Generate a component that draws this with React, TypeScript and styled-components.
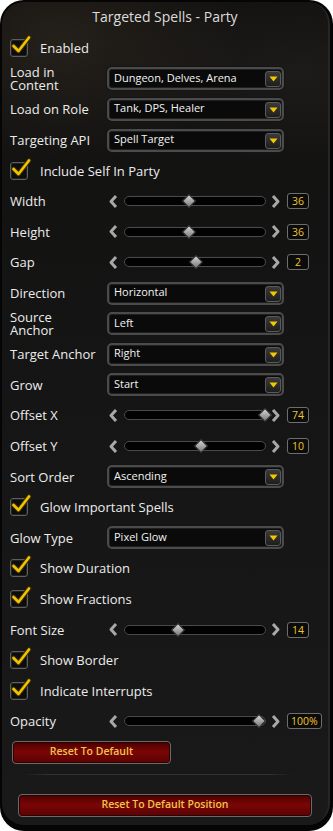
import React from 'react'
import styled, { createGlobalStyle } from 'styled-components'

const Global = createGlobalStyle`
  html, body { margin: 0; padding: 0; background: #fff; }
  * { box-sizing: border-box; }
`

type Row =
  | { kind: 'check'; label: string }
  | { kind: 'drop'; label: string; value: string; two?: boolean }
  | { kind: 'slider'; label: string; value: string; pos: number }

const rows: Row[] = [
  { kind: 'check', label: 'Enabled' },
  { kind: 'drop', label: 'Load in\nContent', value: 'Dungeon, Delves, Arena', two: true },
  { kind: 'drop', label: 'Load on Role', value: 'Tank, DPS, Healer' },
  { kind: 'drop', label: 'Targeting API', value: 'Spell Target' },
  { kind: 'check', label: 'Include Self In Party' },
  { kind: 'slider', label: 'Width', value: '36', pos: 46 },
  { kind: 'slider', label: 'Height', value: '36', pos: 46 },
  { kind: 'slider', label: 'Gap', value: '2', pos: 51 },
  { kind: 'drop', label: 'Direction', value: 'Horizontal' },
  { kind: 'drop', label: 'Source\nAnchor', value: 'Left', two: true },
  { kind: 'drop', label: 'Target Anchor', value: 'Right' },
  { kind: 'drop', label: 'Grow', value: 'Start' },
  { kind: 'slider', label: 'Offset X', value: '74', pos: 100 },
  { kind: 'slider', label: 'Offset Y', value: '10', pos: 54 },
  { kind: 'drop', label: 'Sort Order', value: 'Ascending' },
  { kind: 'check', label: 'Glow Important Spells' },
  { kind: 'drop', label: 'Glow Type', value: 'Pixel Glow' },
  { kind: 'check', label: 'Show Duration' },
  { kind: 'check', label: 'Show Fractions' },
  { kind: 'slider', label: 'Font Size', value: '14', pos: 38 },
  { kind: 'check', label: 'Show Border' },
  { kind: 'check', label: 'Indicate Interrupts' },
  { kind: 'slider', label: 'Opacity', value: '100%', pos: 96 },
]

const Check = () => (
  <CheckBox>
    <CheckMark width="22" height="21" viewBox="0 0 22 21">
      <path d="M3.5 11 L8.5 16 L19 2.5" fill="none" stroke="#3a2c00" strokeWidth="4.6" strokeLinecap="round" strokeLinejoin="round" />
      <path d="M3.5 11 L8.5 16 L19 2.5" fill="none" stroke="#f0c400" strokeWidth="2.6" strokeLinecap="round" strokeLinejoin="round" />
    </CheckMark>
  </CheckBox>
)

const Chevron = ({ dir }: { dir: 'l' | 'r' }) => (
  <svg width="10" height="15" viewBox="0 0 10 15">
    <path d={dir === 'l' ? 'M8 2 L3 7.5 L8 13' : 'M2 2 L7 7.5 L2 13'} fill="none" stroke="#a8a8a8" strokeWidth="3" strokeLinejoin="round" />
  </svg>
)

const App = () => {
  return (
    <>
      <Global />
      <Frame>
        <Inner>
          <Title>Targeted Spells - Party</Title>
          <List>
            {rows.map((r) => (
              <Line key={r.label}>
                {r.kind === 'check' ? (
                  <>
                    <Check />
                    <CheckLabel>{r.label}</CheckLabel>
                  </>
                ) : (
                  <>
                    <Label two={r.kind === 'drop' && !!r.two}>{r.label}</Label>
                    {r.kind === 'drop' ? (
                      <Drop>
                        <DropText>{r.value}</DropText>
                        <DropBtn>
                          <svg width="9" height="6" viewBox="0 0 9 6">
                            <path d="M0.5 0.5 H8.5 L4.5 5.5 Z" fill="#f4c800" />
                          </svg>
                        </DropBtn>
                      </Drop>
                    ) : (
                      <Slider>
                        <Chevron dir="l" />
                        <Track>
                          <Thumb style={{ left: `${r.pos}%` }} />
                        </Track>
                        <Chevron dir="r" />
                        <Value>{r.value}</Value>
                      </Slider>
                    )}
                  </>
                )}
              </Line>
            ))}
          </List>
          <Footer>
            <RedButton small>Reset To Default</RedButton>
            <Sep />
            <RedButton>Reset To Default Position</RedButton>
          </Footer>
        </Inner>
      </Frame>
    </>
  )
}

const Frame = styled.div`
  width: 333px;
  height: 831px;
  background: #050505;
  border-radius: 24px;
  padding: 2px 3px 6px 2px;
  font-family: 'Open Sans', 'Liberation Sans', sans-serif;
`
const Inner = styled.div`
  height: 100%;
  border-radius: 22px;
  border-right: 2px solid #262626;
  background:
    radial-gradient(ellipse 180px 120px at 60px 40px, rgba(70, 60, 45, 0.35), transparent),
    radial-gradient(ellipse 200px 90px at 300px 70px, rgba(60, 55, 50, 0.25), transparent),
    linear-gradient(#121110, #161616 60%, #191919);
  display: flex;
  flex-direction: column;
`
const Title = styled.div`
  height: 31px;
  text-align: center;
  color: #dcdcdc;
  font-size: 14px;
  line-height: 29px;
`
const List = styled.div`
  display: flex;
  flex-direction: column;
  padding-left: 8px;
`
const Line = styled.div`
  height: 30.6px;
  display: flex;
  align-items: center;
`
const CheckBox = styled.div`
  position: relative;
  width: 18px;
  height: 18px;
  border: 1px solid #5e5e5e;
  border-radius: 3px;
  background: #0c0c0c;
  box-shadow: inset 0 0 0 1px #222;
`
const CheckMark = styled.svg`
  position: absolute;
  left: -1px;
  top: -5px;
`
const CheckLabel = styled.span`
  margin-left: 12px;
  color: #ececec;
  font-size: 13px;
`
const Label = styled.span<{ two: boolean }>`
  width: 97px;
  flex: none;
  color: #ececec;
  font-size: 13px;
  white-space: pre-line;
  line-height: ${(p) => (p.two ? '13px' : '16px')};
  padding-right: 4px;
`
const Drop = styled.div`
  width: 177px;
  height: 23px;
  border: 2px solid #4b4b4b;
  border-radius: 5px;
  background: #0a0a0a;
  box-shadow: inset 0 0 0 1px #1f1f1f, 0 0 0 1px #141414;
  display: flex;
  align-items: center;
  padding: 0 1px 0 5px;
`
const DropText = styled.span`
  flex: 1;
  color: #f2f2f2;
  font-size: 11px;
  margin-top: -3px;
`
const DropBtn = styled.div`
  width: 16px;
  height: 16px;
  border-radius: 3px;
  border: 1px solid #5a5a5a;
  background: linear-gradient(#3a3a3a, #1e1e1e);
  display: flex;
  align-items: center;
  justify-content: center;
  margin-top: 1px;
`
const Slider = styled.div`
  display: flex;
  align-items: center;
  margin-left: 1px;
`
const Track = styled.div`
  position: relative;
  width: 142px;
  height: 10px;
  margin: 0 5px 0 6px;
  border-radius: 5px;
  background: #020202;
  border: 1px solid #4a4a4a;
  box-shadow: 0 0 0 1px #161616;
`
const Thumb = styled.div`
  position: absolute;
  top: 50%;
  width: 10px;
  height: 10px;
  background: linear-gradient(135deg, #d4d4d4, #7a7a7a);
  border: 1px solid #444;
  transform: translate(-50%, -50%) rotate(45deg);
`
const Value = styled.span`
  margin-left: 6px;
  min-width: 22px;
  height: 16px;
  padding: 0 3px;
  border: 1px solid #6e6e6e;
  border-radius: 3px;
  background: #0b0b0b;
  color: #f0c52a;
  font-size: 10.5px;
  line-height: 14px;
  text-align: center;
`
const Footer = styled.div`
  display: flex;
  flex-direction: column;
  padding: 4px 0 0 10px;
`
const RedButton = styled.div<{ small?: boolean }>`
  width: ${(p) => (p.small ? '159px' : '294px')};
  height: 23px;
  margin-left: ${(p) => (p.small ? '0' : '6px')};
  border: 1px solid #6a6a6a;
  border-radius: 4px;
  box-shadow: inset 0 0 0 1px #2a0000;
  background: linear-gradient(#4a0000, #7a0606 45%, #5c0202);
  color: #f2c34a;
  font-size: 10.5px;
  font-weight: 600;
  text-align: center;
  line-height: 19px;
`
const Sep = styled.div`
  height: 1px;
  width: 272px;
  margin: 10px 0 19px 10px;
  background: linear-gradient(90deg, transparent, #333 10%, #333 90%, transparent);
`

export default App
